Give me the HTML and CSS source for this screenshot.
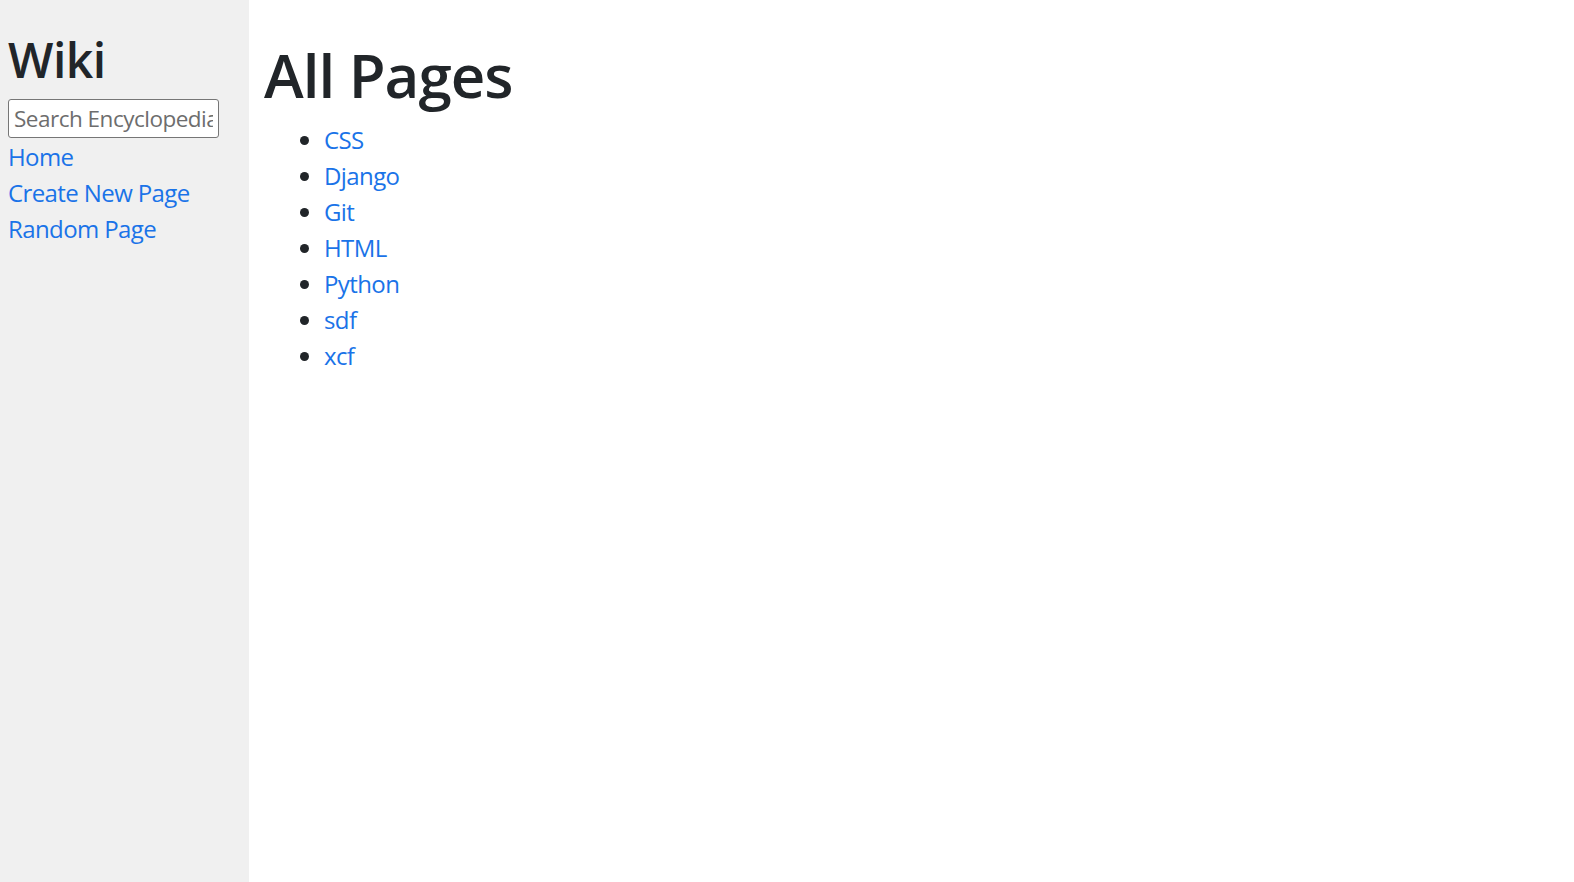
FILE: index.html
```html
<!DOCTYPE html>
<html lang="en">
<head>
<meta charset="utf-8">
<title>Encyclopedia</title>
<link rel="stylesheet" href="styles.css">
</head>
<body>
<div class="layout">
  <aside class="sidebar">
    <h2 class="brand">Wiki</h2>
    <form class="search-form">
      <input class="search" type="text" name="q" placeholder="Search Encyclopedia">
    </form>
    <div class="nav"><a href="#">Home</a></div>
    <div class="nav"><a href="#">Create New Page</a></div>
    <div class="nav"><a href="#">Random Page</a></div>
  </aside>
  <main class="main">
    <h1 class="title">All Pages</h1>
    <ul class="entries">
      <li><a href="#">CSS</a></li>
      <li><a href="#">Django</a></li>
      <li><a href="#">Git</a></li>
      <li><a href="#">HTML</a></li>
      <li><a href="#">Python</a></li>
      <li><a href="#">sdf</a></li>
      <li><a href="#">xcf</a></li>
    </ul>
  </main>
</div>
</body>
</html>
```

FILE: styles.css
```css
html, body {
  margin: 0;
  padding: 0;
  height: 100%;
}
body {
  background: #ffffff;
  color: #212529;
  font-family: "Open Sans", "Noto Sans", sans-serif;
  font-size: 24px;
  line-height: 36px;
}
a {
  color: #1a73e8;
  text-decoration: none;
  letter-spacing: -0.6px;
}
.layout {
  display: flex;
  min-height: 100%;
}
.sidebar {
  width: 249px;
  flex: 0 0 249px;
  background: #f0f0f0;
  padding: 31px 8px 0 8px;
  box-sizing: border-box;
  min-height: 882px;
}
.brand {
  margin: 0 0 10px 0;
  font-size: 48px;
  line-height: 57.6px;
  font-weight: 600;
  letter-spacing: -0.5px;
}
.search-form {
  margin: 0 0 1px 0;
}
.search {
  display: block;
  box-sizing: border-box;
  width: 211px;
  height: 39px;
  margin: 0;
  padding: 0 5px;
  border: 1px solid #767676;
  border-radius: 3px;
  background: #ffffff;
  font-family: inherit;
  font-size: 22.5px;
  letter-spacing: -0.5px;
  color: #212529;
}
.search::placeholder {
  color: #6d6d6d;
}
.main {
  flex: 1;
  padding: 39px 15px 0 15px;
}
.title {
  margin: 0 0 11px 0;
  font-size: 60px;
  line-height: 72px;
  font-weight: 600;
  letter-spacing: -1px;
}
.entries {
  margin: 0;
  padding-left: 60px;
}
```
